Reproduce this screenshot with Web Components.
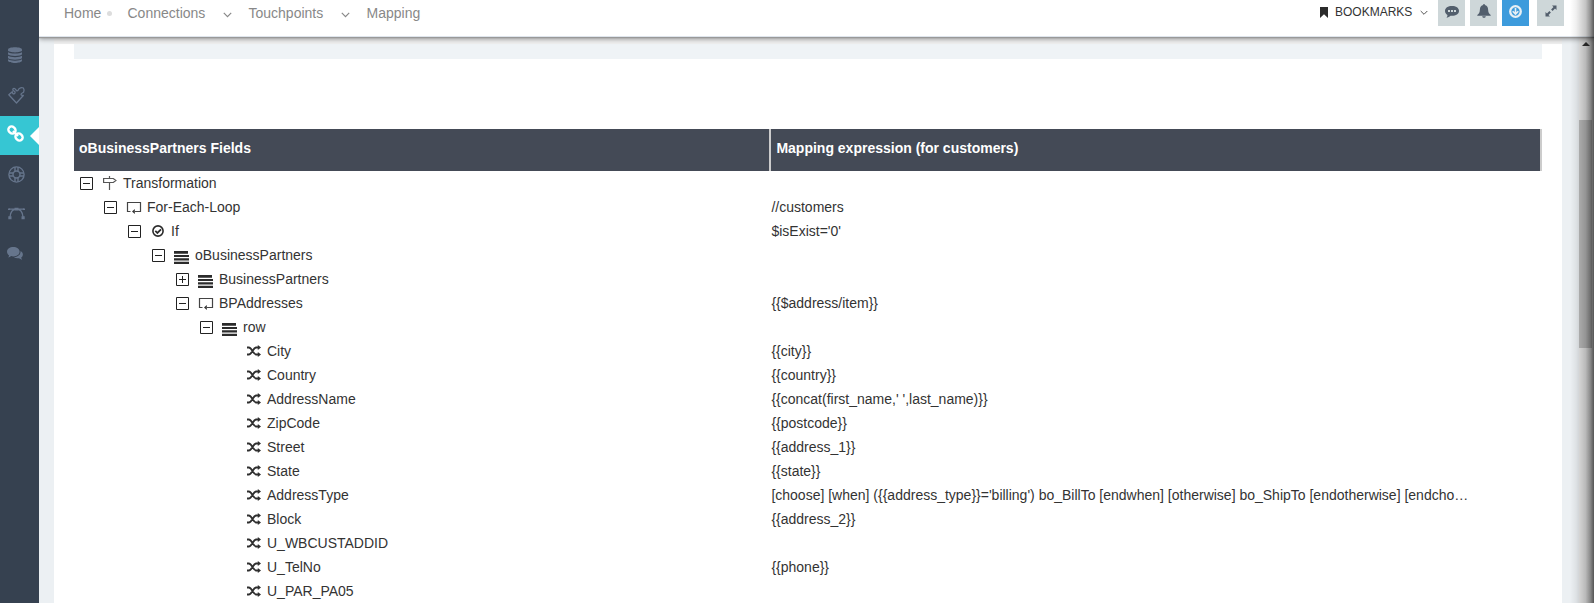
<!DOCTYPE html>
<html lang="en"><head><meta charset="utf-8"><title>Mapping</title>
<style>html,body{margin:0;height:100%;overflow:hidden;background:#ecf0f3;font:14px "Liberation Sans",Arial,sans-serif;color:#333}</style></head>
<body>
<app-shell></app-shell>
<script>
const ICONS={
db:['0 0 14 16','<g fill="#66758c"><path d="M0 2.600C0-.6 14-.6 14 2.600v1C14 6 0 6 0 3.600z"/><path d="M0 5.200c2 1.800 12 1.800 14 0v2.100c-1 2.300-13 2.300-14 0z"/><path d="M0 8.800c2 1.800 12 1.800 14 0v2.100c-1 2.300-13 2.300-14 0z"/><path d="M0 12.300c2 1.800 12 1.800 14 0v1.500c-1 2.900-13 2.900-14 0z"/></g>'],
puzzle:['0 0 17 17','<path d="M.8 7.800 4.300 4.700c-.1 1.500.9 2.500 2.100 1.900 1.300-.7.700-2.100-.4-2.500C4.300 3.500 4.500 1.500 6 1.300c1.700-.2 1.700 2.400 3.200 2.500 1.400 0 1-1.500 2.200-2.300.9-.6 2.900-.9 4-.5.700 1.100.8 3 .2 4.200-.7 1-2.500.7-2.600 2 0 .9 1.100 1.400 2.300 1.300L8.500 16z" fill="none" stroke="#66758c" stroke-width="1.300" stroke-linejoin="round"/>'],
link:['0 0 15 15','<g fill="none" stroke="#fff" stroke-width="2.400" transform="rotate(45 7.500 7.500)"><rect x="-1.300" y="4.300" width="7.600" height="6.400" rx="3.200"/><rect x="8.700" y="4.300" width="7.600" height="6.400" rx="3.200"/><path d="M4 7.500h7"/></g>'],
ring:['0 0 17 17','<g fill="none" stroke="#66758c" stroke-width="1.400"><circle cx="8.500" cy="8.500" r="7.600"/><circle cx="8.500" cy="8.500" r="3.500"/><path d="M7 1v4.200M10 1v4.200M7 11.800V16M10 11.800V16M1 7h4.200M1 10h4.200M11.800 7H16M11.800 10H16"/></g>'],
bezier:['0 0 17 13','<g fill="none" stroke="#66758c" stroke-width="1.300"><path d="M1 2.200h15M2 10C2.500 5 4.500 2 8.500 2s6 3 6.500 8"/></g><path d="M6.500.8h4v2.800h-4zM0 1.400h2v1.700H0zM15 1.400h2v1.700h-2zM.3 9.200h3.200v3H.3zM13.500 9.200h3.200v3h-3.200z" fill="#66758c"/>'],
chats:['0 0 16 13','<g fill="#66758c"><path d="M6.300 0c3.500 0 6.300 2 6.300 4.700S9.800 9.400 6.300 9.400c-.8 0-1.500-.1-2.200-.3-.8.8-2 1.200-3 1.300.6-.7.900-1.300 1-2C.8 7.600 0 6.200 0 4.700 0 2 2.800 0 6.300 0z"/><path d="M13.500 3.900c3 1.500 3.100 5 .7 6.500.1.900.5 1.600 1 2.100-1.400-.1-2.300-.6-3-1.300-2 .3-4 0-5.400-1 4 0 7-2.500 6.700-6.300z"/></g>'],
chevron:['0 0 9 6','<path d="m.8.900 3.700 3.700L8.200.9" fill="none" stroke="currentColor" stroke-width="1.200"/>'],
chevsmall:['0 0 8 6','<path d="m.7 1 3.300 3.300L7.300 1" fill="none" stroke="currentColor" stroke-width="1"/>'],
bookmark:['0 0 8 11','<path d="M0 0h8v11L4 7.200 0 11z" fill="#2b2b2b"/>'],
bubble:['0 0 14 12','<path d="M7 0c4 0 7 2 7 4.900s-3 4.900-7 4.900c-.5 0-1 0-1.500-.1C4.400 10.800 3 11.500 1.500 11.700c.6-.8 1-1.700 1-2.700C1 8 0 6.600 0 4.900 0 2 3 0 7 0z" fill="#525e6c"/><path d="M3 4h2v2H3zM6 4h2v2H6zM9 4h2v2H9z" fill="#ced7d9"/>'],
bell:['0 0 14 14','<path d="M6.300 0h1.400v1c2.200.4 3.300 2 3.400 4.500.1 3 1 4.200 2.600 5.500v.7H.3V11c1.600-1.300 2.500-2.500 2.600-5.500C3 3 4.100 1.400 6.300 1zM5.200 12.200h3.600c-.2 2.200-3.400 2.200-3.600 0z" fill="#525e6c"/>'],
down:['0 0 13 13','<circle cx="6.500" cy="6.500" r="5.300" fill="none" stroke="#e8eff4" stroke-width="2.300"/><path d="M6.500 3v6M3.700 6.200l2.800 2.900 2.800-2.900" fill="none" stroke="#e8eff4" stroke-width="1.600"/>'],
expand:['0 0 12 12','<path d="M7 .5h4.500V5L10 3.500 7.600 5.900 6.100 4.400 8.500 2zM5 11.500H.5V7L2 8.500l2.400-2.400 1.500 1.500L3.500 10z" fill="#525e6c"/>'],
sign:['0 0 14 14','<path d="M6.500 0v2M.6 2.500h9.700l2.600 2-2.600 2H.6zM6.500 6.500V14" fill="none" stroke="#555" stroke-width="1.200"/>'],
loop:['0 0 16 13','<path d="M4.500 10.500H1.500V1.500h13v9H9" fill="none" stroke="#444" stroke-width="1.200"/><path d="M6 10.500 8.800 8v5z" fill="#333"/>'],
check:['0 0 12 12','<circle cx="6" cy="6" r="5.100" fill="none" stroke="#2b2b2b" stroke-width="1.600"/><path d="m3.300 5.800 2.100 2.100L9 4.300" fill="none" stroke="#2b2b2b" stroke-width="1.800"/>'],
bars:['0 0 15 13','<path d="M0 0h14v2.700H0zM0 4h15v2H0zM0 7.200h15v2.300H0zM0 10.700h15V13H0z" fill="#2b2b2b"/>'],
shuffle:['0 0 14 12','<path d="M0 2.500h1.800C5 2.500 6 9.500 9.200 9.500H12M0 9.500h1.800C5 9.500 6 2.500 9.200 2.500H12" fill="none" stroke="#2f2f2f" stroke-width="1.800"/><path d="M10.800 0 14 2.500 10.800 5zM10.800 7 14 9.500 10.800 12z" fill="#2f2f2f"/>'],
minus:['0 0 13 13','<path d="M.5.5h12v12H.5zM3 6.500h7" fill="none" stroke="#222"/>'],
plus:['0 0 13 13','<path d="M.5.5h12v12H.5zM3 6.500h7M6.500 3v7" fill="none" stroke="#222"/>']};
const define=(n,render)=>customElements.define(n,class extends HTMLElement{
 connectedCallback(){if(!this.shadowRoot)this.attachShadow({mode:'open'}).innerHTML=render(this)}});

define('ui-icon',e=>{const [vb,body]=ICONS[e.getAttribute('name')];const [,,w,h]=vb.split(' ');
 return `<style>:host{display:block;flex:none}svg{display:block;overflow:visible}</style><svg width="${w}" height="${h}" viewBox="${vb}">${body}</svg>`});

define('side-item',e=>`<style>:host{display:flex;height:40px;align-items:center;padding-left:8px;box-sizing:border-box;position:relative}
:host([active]){background:#36c6d3;height:39px;padding-bottom:4px}
:host([active])::after{content:"";position:absolute;right:0;top:11px;border:9px solid transparent;border-left:0;border-right-color:#fff}</style>
<ui-icon name="${e.getAttribute('icon')}"></ui-icon>`);

define('side-nav',()=>`<style>:host{display:block;background:#364150;padding-top:35px;box-sizing:border-box;position:relative;z-index:2}
.puzzle{height:41px}.ring{height:38px}.chats{padding-left:7px}</style>
<side-item icon="db"></side-item><side-item class="puzzle" icon="puzzle"></side-item><side-item active icon="link"></side-item>
<side-item class="ring" icon="ring"></side-item><side-item icon="bezier"></side-item><side-item class="chats" icon="chats"></side-item>`);

define('tool-button',e=>`<style>:host{display:flex;justify-content:center;width:27px;height:26px;background:#ced7d9;box-sizing:border-box;padding-top:var(--pt,5px)}
:host([blue]){background:#3d9bdc}</style><ui-icon name="${e.getAttribute('icon')}"></ui-icon>`);

define('top-bar',()=>`<style>:host{display:flex;height:36px;background:#fff;border-bottom:1px solid #dfe5ec;box-sizing:content-box;box-shadow:0 1px 1px #999,0 2px 5px rgba(0,0,0,.4);position:relative;z-index:1;color:#888}
nav{display:flex;height:26px;line-height:26px;padding-left:25px;flex:1}
nav ui-icon{margin-top:12px}.dot{width:5px;height:5px;border-radius:50%;background:#ddd;margin:11px 15.500px 0 0}
.bm{display:flex;font-size:12px;color:#333;line-height:25px}.bm span{margin:0 8px 0 7px;width:77px;white-space:nowrap}
.tools{display:flex;gap:5px;margin:0 30px 0 10px}</style>
<nav><span style="width:43px">Home</span><i class="dot"></i><span style="width:95px">Connections</span><ui-icon name="chevron"></ui-icon><span style="margin-left:17px;width:92.500px">Touchpoints</span><ui-icon name="chevron"></ui-icon><span style="margin-left:16.500px">Mapping</span></nav>
<div class="bm"><ui-icon name="bookmark" style="margin-top:7px"></ui-icon><span>BOOKMARKS</span><ui-icon name="chevsmall" style="margin-top:10px;color:#555"></ui-icon></div>
<div class="tools"><tool-button icon="bubble" style="--pt:6px"></tool-button><tool-button icon="bell" style="--pt:4px"></tool-button><tool-button blue icon="down" style="--pt:4.500px"></tool-button><tool-button icon="expand" style="margin-left:3px"></tool-button></div>`);

define('tree-row',e=>{const g=n=>e.getAttribute(n);return `<style>:host{display:grid;grid-template-columns:697.400px 1fr;height:24px;line-height:24px;white-space:nowrap}
.n{display:flex;align-items:center;padding-left:${6+24*g('level')}px}
.t{width:13px;margin-right:9px}.i{width:21px;box-sizing:border-box}.i.check{padding-left:1.500px}.i.bars{padding-top:4px}.i.sign{padding-left:1px}.i.shuffle{padding-left:.5px;margin-top:-1px}
.e{overflow:hidden;text-overflow:ellipsis;width:698px}</style>
<div class="n"><div class="t">${g('toggle')?`<ui-icon name="${g('toggle')}"></ui-icon>`:''}</div><div class="i ${g('icon')}"><ui-icon name="${g('icon')}"></ui-icon></div><slot></slot></div><div class="e">${g('expr')||''}</div>`});

define('mapping-table',()=>{const rows=[[0,'minus','sign','Transformation'],[1,'minus','loop','For-Each-Loop','//customers'],[2,'minus','check','If',"$isExist='0'"],[3,'minus','bars','oBusinessPartners'],[4,'plus','bars','BusinessPartners'],[4,'minus','loop','BPAddresses','{{$address/item}}'],[5,'minus','bars','row'],
...[['City','{{city}}'],['Country','{{country}}'],['AddressName',"{{concat(first_name,' ',last_name)}}"],['ZipCode','{{postcode}}'],['Street','{{address_1}}'],['State','{{state}}'],['AddressType',"[choose] [when] ({{address_type}}='billing') bo_BillTo [endwhen] [otherwise] bo_ShipTo [endotherwise] [endcho…"],['Block','{{address_2}}'],['U_WBCUSTADDID'],['U_TelNo','{{phone}}'],['U_PAR_PA05']].map(r=>[6,'','shuffle',...r])];
return `<style>:host{display:block}header{display:grid;grid-template-columns:697px 771px;height:42px;line-height:38px;color:#fff;font-weight:bold}
header div{background:#444a56;border-right:2px solid #ccc;padding-left:5px}header div+div{padding-left:5.400px}</style>
<header><div>oBusinessPartners Fields</div><div>Mapping expression (for customers)</div></header>
${rows.map(([l,t,i,n,x=''])=>`<tree-row level="${l}" toggle="${t}" icon="${i}" expr="${x}">${n}</tree-row>`).join('')}`});

define('scroll-bar',()=>`<style>:host{display:block;width:15px;background:#f1f1f1;padding-top:5px;box-sizing:border-box}
i{display:block;width:0;margin:0 0 0 2.500px;border:4px solid transparent;border-top:0;border-bottom:4px solid #333}
b{display:block;width:13px;height:228px;background:#c1c1c1;margin-top:74px}</style><i></i><b></b>`);

define('app-shell',()=>`<style>:host{display:grid;grid-template-columns:39px 1fr;height:603px;overflow:hidden;position:relative}
main{display:flex;flex-direction:column;min-width:0}.body{display:flex;flex:1;min-height:0;padding-left:15px}
.panel{width:1508px;background:#fff;border-top:7px solid #f0f0f0;padding:0 20px;box-sizing:border-box;overflow:hidden}
.strip{height:15px;background:#eff3f6;margin-bottom:70px}scroll-bar{margin-left:17px}
.edge{position:absolute;z-index:2;right:0;top:0;bottom:0;width:24px;background:linear-gradient(90deg,transparent,rgba(0,0,0,.06) 25%,rgba(0,0,0,.23) 65%,rgba(0,0,0,.42) 84%,rgba(0,0,0,.65))}</style>
<side-nav></side-nav><main><top-bar></top-bar><div class="body"><div class="panel"><div class="strip"></div><mapping-table></mapping-table></div><scroll-bar></scroll-bar></div></main><div class="edge"></div>`);
</script></body></html>
